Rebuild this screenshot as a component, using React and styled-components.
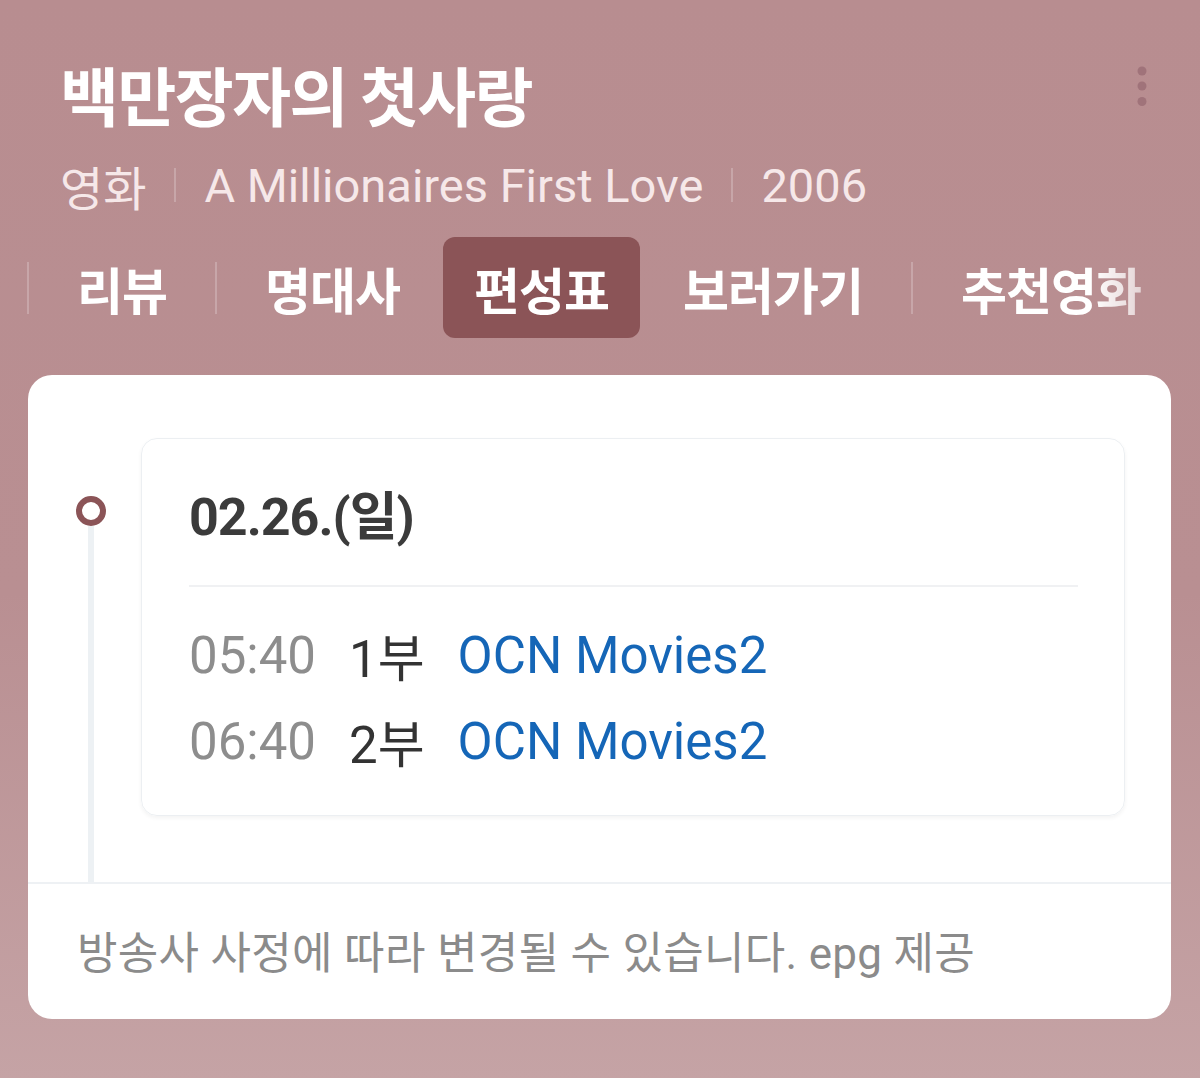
import React from "react";
import styled, { createGlobalStyle } from "styled-components";

const GlobalStyle = createGlobalStyle`
  html, body {
    margin: 0;
    padding: 0;
  }
  body {
    font-family: Roboto, "Noto Sans CJK KR", sans-serif;
    -webkit-font-smoothing: antialiased;
  }
`;

const Page = styled.div`
  width: 1200px;
  min-height: 1078px;
  box-sizing: border-box;
  background: linear-gradient(180deg, #b88d90 0%, #b98f92 55%, #c5a3a5 100%);
  padding-top: 50px;
  overflow: hidden;
`;

const TopRow = styled.div`
  display: flex;
  justify-content: space-between;
  align-items: flex-start;
  padding-left: 60px;
`;

const Title = styled.h1`
  margin: 0;
  height: 86px;
  line-height: 86px;
  font-family: "Noto Sans CJK KR", sans-serif;
  font-size: 64px;
  font-weight: 700;
  letter-spacing: -1.5px;
  color: #ffffff;
`;

const MoreButton = styled.button`
  border: none;
  background: none;
  padding: 0;
  margin: 16px 46px 0 0;
  width: 24px;
  height: 40px;
  display: flex;
  align-items: center;
  justify-content: center;
`;

const Meta = styled.div`
  display: flex;
  align-items: center;
  gap: 28px;
  margin-top: 14px;
  height: 70px;
  padding-left: 60px;
  font-size: 47px;
  color: #f6e8e9;
`;

const MetaSep = styled.span`
  width: 2px;
  height: 34px;
  background: rgba(255, 255, 255, 0.22);
`;

const Tabs = styled.nav`
  display: flex;
  align-items: center;
  height: 101px;
  margin-top: 17px;
  padding-left: 15px;
  white-space: nowrap;
  mask-image: linear-gradient(90deg, #000 0, #000 1090px, rgba(0, 0, 0, 0.2) 1200px);
`;

const Tab = styled.button`
  flex: none;
  height: 101px;
  padding: 0 ${(p) => (p.$active ? 31 : 36)}px;
  border: none;
  border-radius: 12px;
  background: ${(p) => (p.$active ? "#8b5457" : "transparent")};
  color: #ffffff;
  font-family: "Noto Sans CJK KR", sans-serif;
  font-size: 50px;
  font-weight: 700;
  letter-spacing: -1px;
`;

const TabSep = styled.span`
  flex: none;
  width: 2px;
  height: 52px;
  margin: 0 12px;
  background: rgba(255, 255, 255, 0.22);
`;

/* no divider next to the selected tab, only a little room */
const TabGap = styled.span`
  flex: none;
  width: ${(p) => p.$w}px;
`;

const Card = styled.section`
  margin: 37px 29px 0 28px;
  background: #ffffff;
  border-radius: 24px;
  overflow: hidden;
`;

const Body = styled.div`
  display: grid;
  grid-template-columns: 113px 1fr;
  padding-right: 46px;
  border-bottom: 2px solid #eef1f4;
`;

const Timeline = styled.div`
  display: flex;
  flex-direction: column;
  align-items: flex-start;
  padding: 121px 0 0 48px;
`;

const Dot = styled.span`
  width: 30px;
  height: 30px;
  box-sizing: border-box;
  border: 6px solid #8b5457;
  border-radius: 50%;
`;

const Line = styled.span`
  flex: 1;
  width: 6px;
  margin-left: 12px;
  background: #edf1f4;
`;

const Slot = styled.div`
  padding: 63px 0 66px;
`;

const DayCard = styled.div`
  border: 1px solid #eceff2;
  border-radius: 16px;
  box-shadow: 0 2px 4px rgba(0, 0, 0, 0.05);
  padding: 0 46px 31px 47px;
`;

const DateHead = styled.div`
  height: 146px;
  display: flex;
  align-items: center;
  border-bottom: 2px solid #f0f1f3;
  font-size: 52px;
  font-weight: 700;
  letter-spacing: -1px;
  color: #3b3b3b;
`;

const Airings = styled.div`
  padding-top: 25px;
`;

const Row = styled.div`
  display: flex;
  align-items: center;
  gap: 33px;
  height: 86px;
  font-size: 51px;
`;

const Time = styled.span`
  color: #8d8d8d;
`;

const Part = styled.span`
  color: #333333;
`;

const Channel = styled.span`
  color: #1566b7;
`;

const Footer = styled.div`
  height: 131px;
  display: flex;
  align-items: center;
  padding: 0 49px 4px;
  font-size: 44px;
  letter-spacing: 0.3px;
  color: #8b8b8b;
`;

const tabs = [
  { label: "리뷰" },
  { label: "명대사" },
  { label: "편성표", active: true },
  { label: "보러가기" },
  { label: "추천영화" },
];

const airings = [
  { time: "05:40", part: "1부", channel: "OCN Movies2" },
  { time: "06:40", part: "2부", channel: "OCN Movies2" },
];

function KebabIcon() {
  return (
    <svg width="12" height="40" viewBox="0 0 12 40">
      <circle cx="6" cy="5" r="4.5" fill="#a0737a" />
      <circle cx="6" cy="20" r="4.5" fill="#a0737a" />
      <circle cx="6" cy="35.5" r="4.5" fill="#a0737a" />
    </svg>
  );
}

export default function App() {
  return (
    <>
      <GlobalStyle />
      <Page>
        <TopRow>
          <Title>백만장자의 첫사랑</Title>
          <MoreButton aria-label="more">
            <KebabIcon />
          </MoreButton>
        </TopRow>
        <Meta>
          <span>영화</span>
          <MetaSep />
          <span>A Millionaires First Love</span>
          <MetaSep />
          <span>2006</span>
        </Meta>

        <Tabs>
          <TabSep />
          {tabs.map((t, i) => {
            const next = tabs[i + 1];
            let divider = null;
            if (next && (next.active || t.active)) divider = <TabGap $w={7} />;
            else if (next) divider = <TabSep />;
            return (
              <React.Fragment key={t.label}>
                <Tab $active={t.active}>{t.label}</Tab>
                {divider}
              </React.Fragment>
            );
          })}
        </Tabs>

        <Card>
          <Body>
            <Timeline>
              <Dot />
              <Line />
            </Timeline>
            <Slot>
              <DayCard>
                <DateHead>02.26.(일)</DateHead>
                <Airings>
                  {airings.map((a) => (
                    <Row key={a.time}>
                      <Time>{a.time}</Time>
                      <Part>{a.part}</Part>
                      <Channel>{a.channel}</Channel>
                    </Row>
                  ))}
                </Airings>
              </DayCard>
            </Slot>
          </Body>
          <Footer>방송사 사정에 따라 변경될 수 있습니다. epg 제공</Footer>
        </Card>
      </Page>
    </>
  );
}
